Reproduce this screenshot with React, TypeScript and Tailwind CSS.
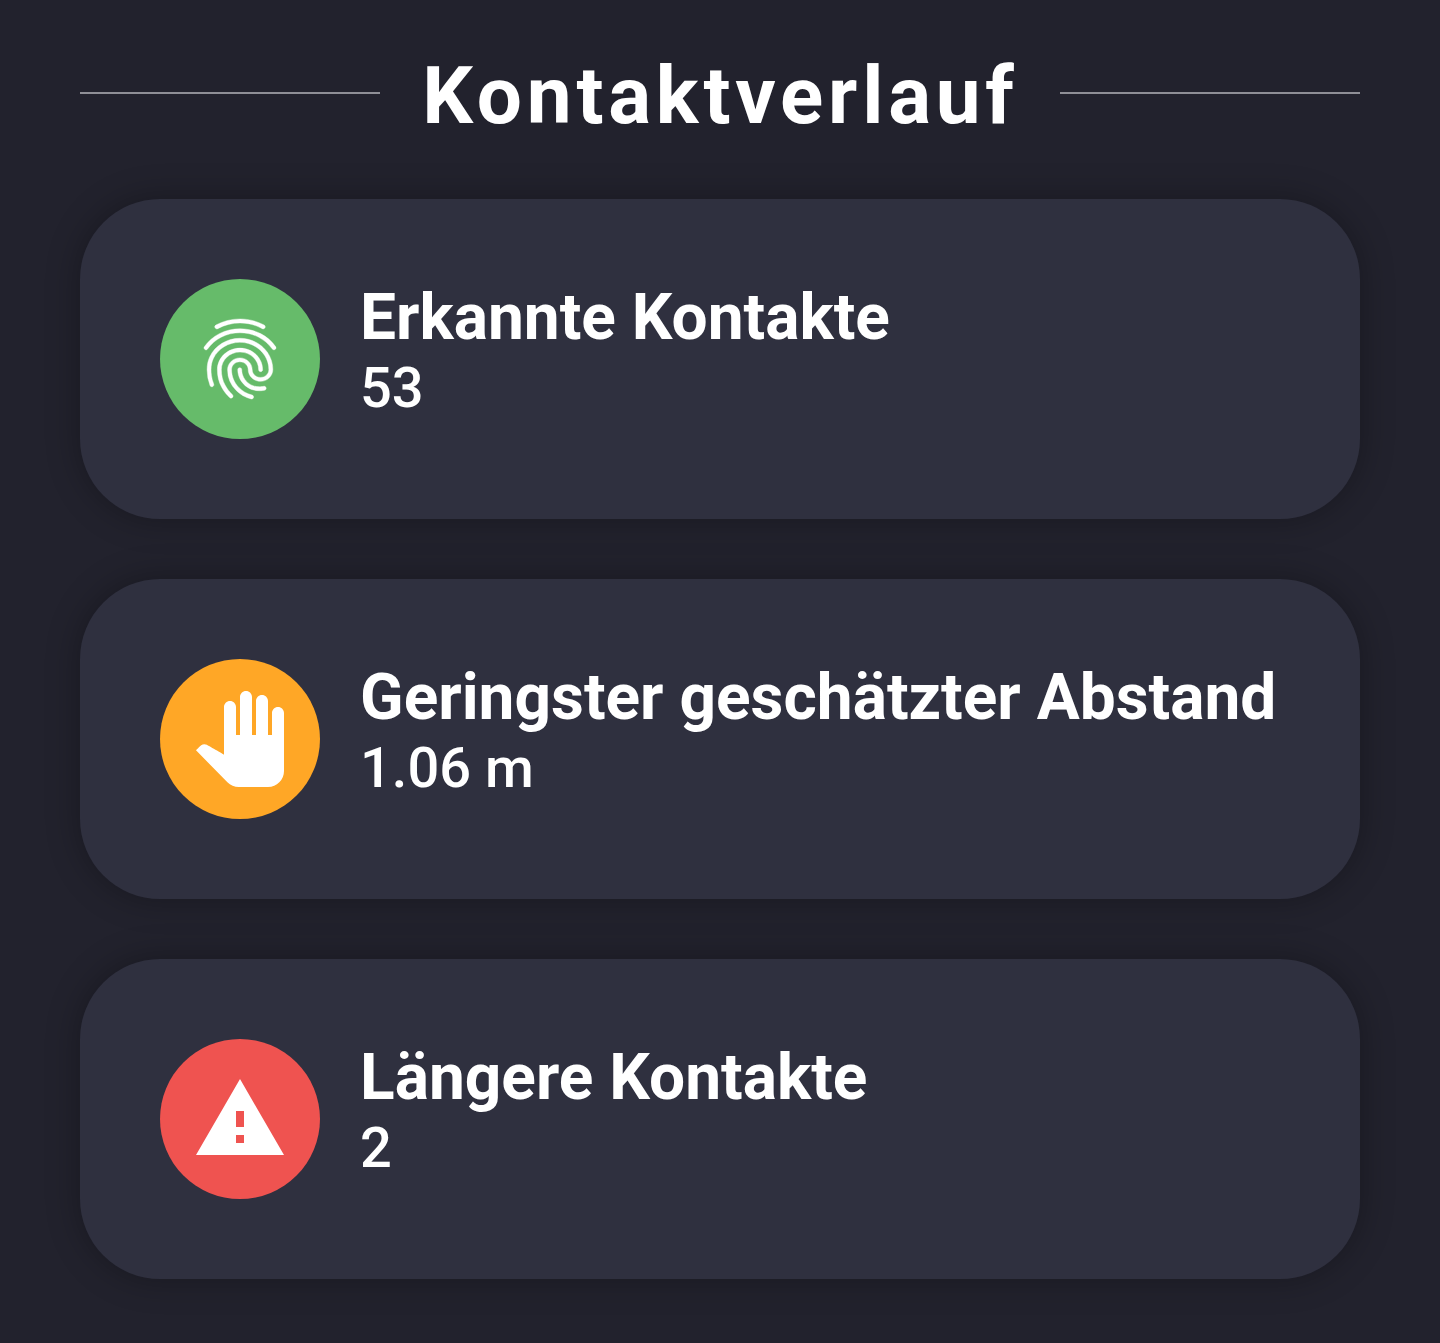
import { MdFingerprint, MdPanTool, MdWarning } from "react-icons/md";
import type { IconType } from "react-icons";

type CardProps = {
  title: string;
  value: string;
  color: string;
  Icon: IconType;
  iconClass: string;
};

const cards: CardProps[] = [
  {
    title: "Erkannte Kontakte",
    value: "53",
    color: "bg-[#66bb6a]",
    Icon: MdFingerprint,
    iconClass: "size-24 stroke-[0.1] [&>path:first-child]:stroke-none",
  },
  {
    title: "Geringster geschätzter Abstand",
    value: "1.06 m",
    color: "bg-[#ffa726]",
    Icon: MdPanTool,
    iconClass: "size-24",
  },
  {
    title: "Längere Kontakte",
    value: "2",
    color: "bg-[#ef5350]",
    Icon: MdWarning,
    iconClass: "size-24",
  },
];

function Card({ title, value, color, Icon, iconClass }: CardProps) {
  return (
    <section className="flex h-[320px] items-start gap-10 rounded-[80px] bg-[#2f303f] p-20 shadow-[0_0_34px_rgba(0,0,0,0.3)]">
      <div className={`flex size-40 shrink-0 items-center justify-center rounded-full ${color}`}>
        <Icon className={iconClass} />
      </div>
      <div className="pt-px whitespace-nowrap">
        <h2 className="text-[64px] leading-[75px] font-bold">{title}</h2>
        <p className="text-[56px] leading-[66px] font-medium">{value}</p>
      </div>
    </section>
  );
}

export default function App() {
  return (
    <main className="h-[1343px] overflow-hidden bg-[#22222d] px-20 font-['Roboto',sans-serif] text-white">
      <header className="flex h-[199px] items-start justify-between">
        <div className="mt-[92px] h-0.5 w-[300px] bg-[#8f8f96]" />
        <h1 className="mt-[49px] pl-px text-[80px] leading-[94px] font-bold tracking-[4.8px]">
          Kontaktverlauf
        </h1>
        <div className="mt-[92px] h-0.5 w-[300px] bg-[#8f8f96]" />
      </header>
      <div className="flex flex-col gap-[60px]">
        {cards.map((card) => (
          <Card key={card.title} {...card} />
        ))}
      </div>
    </main>
  );
}
